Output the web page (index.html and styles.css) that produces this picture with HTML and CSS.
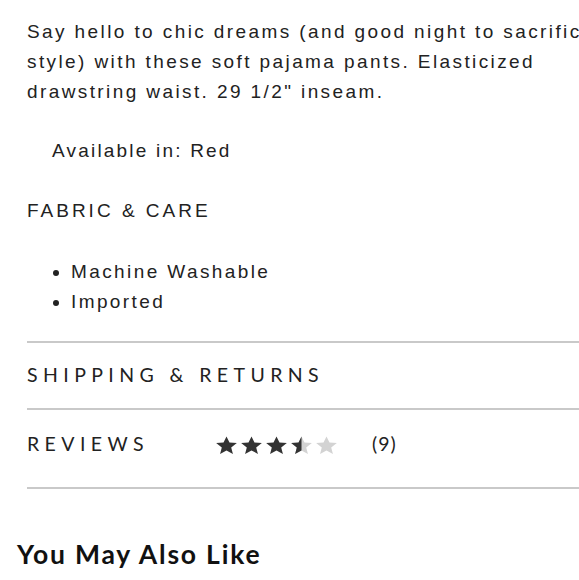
FILE: index.html
```html
<!DOCTYPE html>
<html lang="en">
<head>
<meta charset="utf-8">
<title>Product details</title>
<link rel="stylesheet" href="styles.css">
</head>
<body>
<div class="page">
  <div class="details">
    <p class="copy">Say hello to chic dreams (and good night to sacrificing<br>style) with these soft pajama pants. Elasticized<br>drawstring waist. 29 1/2" inseam.</p>
    <p class="avail">Available in: Red</p>
    <h3 class="fabric">FABRIC &amp; CARE</h3>
    <ul class="care">
      <li>Machine Washable</li>
      <li>Imported</li>
    </ul>
    <div class="accordion">
      <div class="acc-row shipping">SHIPPING &amp; RETURNS</div>
      <div class="acc-row reviews">
        <span class="acc-title">REVIEWS</span>
        <span class="stars" aria-label="3.5 out of 5 stars">
          <svg class="star" viewBox="0 0 24 22" preserveAspectRatio="none"><path class="on" d="M12 0.5l3.1 7.1 7.7.6-5.9 5 1.8 7.5L12 16.7l-6.7 4 1.8-7.5-5.9-5 7.7-.6z"/></svg>
          <svg class="star" viewBox="0 0 24 22" preserveAspectRatio="none"><path class="on" d="M12 0.5l3.1 7.1 7.7.6-5.9 5 1.8 7.5L12 16.7l-6.7 4 1.8-7.5-5.9-5 7.7-.6z"/></svg>
          <svg class="star" viewBox="0 0 24 22" preserveAspectRatio="none"><path class="on" d="M12 0.5l3.1 7.1 7.7.6-5.9 5 1.8 7.5L12 16.7l-6.7 4 1.8-7.5-5.9-5 7.7-.6z"/></svg>
          <svg class="star" viewBox="0 0 24 22" preserveAspectRatio="none"><defs><clipPath id="halfclip"><rect x="0" y="0" width="12" height="22"/></clipPath></defs><path class="off" d="M12 0.5l3.1 7.1 7.7.6-5.9 5 1.8 7.5L12 16.7l-6.7 4 1.8-7.5-5.9-5 7.7-.6z"/><path class="on" clip-path="url(#halfclip)" d="M12 0.5l3.1 7.1 7.7.6-5.9 5 1.8 7.5L12 16.7l-6.7 4 1.8-7.5-5.9-5 7.7-.6z"/></svg>
          <svg class="star" viewBox="0 0 24 22" preserveAspectRatio="none"><path class="off" d="M12 0.5l3.1 7.1 7.7.6-5.9 5 1.8 7.5L12 16.7l-6.7 4 1.8-7.5-5.9-5 7.7-.6z"/></svg>
        </span>
        <span class="count">(9)</span>
      </div>
    </div>
  </div>
  <h2 class="also">You May Also Like</h2>
</div>
</body>
</html>
```

FILE: styles.css
```css
html, body {
  margin: 0;
  padding: 0;
  overflow-x: hidden;
  background: #fff;
}

.page {
  width: 680px;
  color: #222;
  font-family: "Liberation Sans", Arial, sans-serif;
}

.details {
  margin-left: 27px;
  width: 653px;
}

.copy {
  margin: 17px 0 0;
  font-size: 19px;
  line-height: 30px;
  letter-spacing: 2.4px;
  white-space: nowrap;
}

.avail {
  margin: 29px 0 0 25px;
  font-size: 19px;
  line-height: 30px;
  letter-spacing: 2.2px;
}

.fabric {
  margin: 30px 0 0;
  font-size: 19px;
  font-weight: normal;
  line-height: 30px;
  letter-spacing: 3px;
}

.care {
  margin: 31px 0 0;
  padding-left: 44px;
  font-size: 19px;
  line-height: 30px;
  letter-spacing: 2.4px;
}

.accordion {
  margin-top: 24px;
  border-bottom: 2px solid #c9c9c9;
}

.acc-row {
  display: flex;
  align-items: flex-start;
  border-top: 2px solid #c9c9c9;
  font-family: Lato, "Liberation Sans", sans-serif;
  font-size: 19.5px;
  line-height: 24px;
  letter-spacing: 5.4px;
  color: #222;
}

.shipping {
  padding: 20px 0 21px;
}

.reviews {
  padding: 22px 0 31px;
}

.acc-title {
  width: 188px;
  flex: none;
}

.stars {
  display: flex;
  gap: 2px;
  margin-top: 4px;
}

.star {
  width: 23px;
  height: 19px;
  display: block;
}

.star .on { fill: #333; }
.star .off { fill: #d3d3d3; }

.count {
  margin-left: 34px;
  letter-spacing: 1px;
}

.also {
  margin: 49px 0 0 17px;
  font-family: Lato, "Liberation Sans", sans-serif;
  font-weight: bold;
  font-size: 26.5px;
  line-height: 32px;
  letter-spacing: 1.8px;
  color: #111;
}
```
